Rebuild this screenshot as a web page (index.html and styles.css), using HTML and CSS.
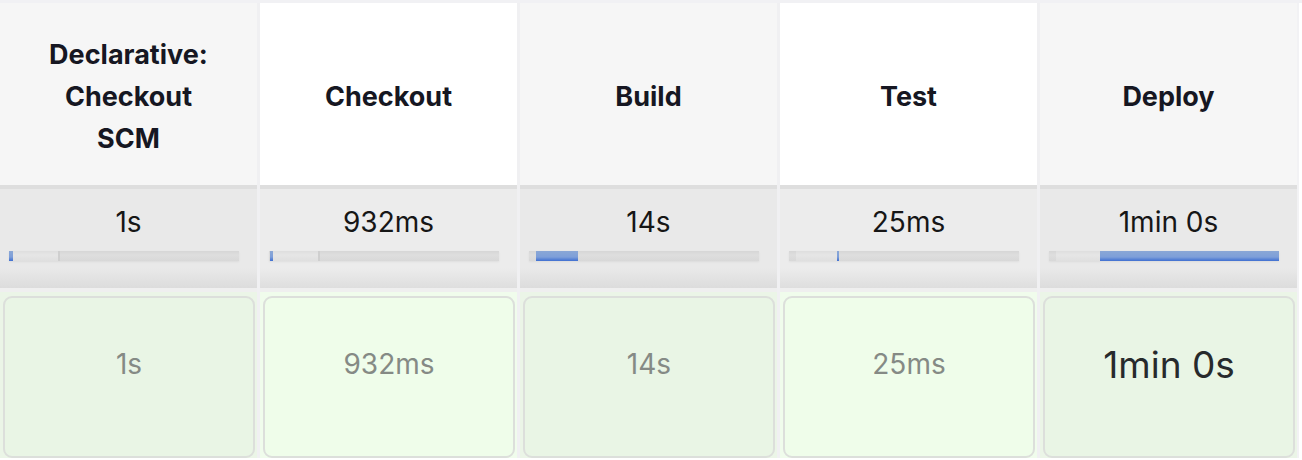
FILE: index.html
```html
<!DOCTYPE html>
<html>
<head>
<meta charset="utf-8">
<link rel="stylesheet" href="styles.css">
</head>
<body>
<div class="stage-view">
  <div class="col col-alt">
    <div class="head"><span class="name">Declarative: Checkout SCM</span></div>
    <div class="avg">
      <div class="avg-time">1s</div>
      <div class="bar">
        <span class="seg light" style="left:4px;width:45px"></span>
        <span class="seg mark" style="left:49px"></span>
        <span class="seg run" style="left:0;width:4px"></span>
      </div>
    </div>
    <div class="cell"><div class="box">1s</div></div>
  </div>
  <div class="col">
    <div class="head"><span class="name">Checkout</span></div>
    <div class="avg">
      <div class="avg-time">932ms</div>
      <div class="bar">
        <span class="seg light" style="left:4px;width:45px"></span>
        <span class="seg mark" style="left:49px"></span>
        <span class="seg run" style="left:1px;width:3px"></span>
      </div>
    </div>
    <div class="cell"><div class="box">932ms</div></div>
  </div>
  <div class="col col-alt">
    <div class="head"><span class="name">Build</span></div>
    <div class="avg">
      <div class="avg-time">14s</div>
      <div class="bar">
        <span class="seg light" style="left:7px;width:42px"></span>
        <span class="seg run" style="left:7px;width:42px"></span>
      </div>
    </div>
    <div class="cell"><div class="box">14s</div></div>
  </div>
  <div class="col">
    <div class="head"><span class="name">Test</span></div>
    <div class="avg">
      <div class="avg-time">25ms</div>
      <div class="bar">
        <span class="seg light" style="left:7px;width:42px"></span>
        <span class="seg run" style="left:48px;width:2px"></span>
      </div>
    </div>
    <div class="cell"><div class="box">25ms</div></div>
  </div>
  <div class="col col-alt">
    <div class="head"><span class="name">Deploy</span></div>
    <div class="avg">
      <div class="avg-time">1min 0s</div>
      <div class="bar">
        <span class="seg light" style="left:7px;width:44px"></span>
        <span class="seg run" style="left:51px;width:179px"></span>
      </div>
    </div>
    <div class="cell"><div class="box box-long">1min 0s</div></div>
  </div>
</div>
</body>
</html>
```
FILE: styles.css
```css
html, body {
  margin: 0;
  padding: 0;
  background: #ffffff;
}
body {
  font-family: Inter, "Noto Sans", "Liberation Sans", sans-serif;
  overflow: hidden;
}
.stage-view {
  display: flex;
  border-top: 3px solid #f1f1f4;
  width: 1302px;
}
.col {
  width: 257px;
  border-right: 3px solid #f0f0f2;
  display: flex;
  flex-direction: column;
  flex: none;
}
.col:last-child {
  width: 257px;
  border-right: 2px solid #f2f2f4;
}
.head {
  height: 182px;
  display: flex;
  align-items: center;
  justify-content: center;
  background: #ffffff;
  text-align: center;
  padding: 6px 40px 0;
  box-sizing: border-box;
}
.col-alt .head {
  background: #f6f6f6;
}
.name {
  font-size: 27px;
  font-weight: 700;
  line-height: 42px;
  color: #161722;
}
.avg {
  height: 99px;
  border-top: 4px solid #dedede;
  border-bottom: 4px solid #efefef;
  background: linear-gradient(#e9e9e9 0%, #e9e9e9 80%, #dcdcdc 100%);
  display: flex;
  flex-direction: column;
  align-items: center;
}
.col:not(.col-alt) .avg {
  background: linear-gradient(#ececec 0%, #ececec 80%, #dedede 100%);
}
.avg-time {
  margin-top: 16px;
  font-size: 28px;
  line-height: 34px;
  color: #161616;
}
.bar {
  position: relative;
  align-self: flex-start;
  margin-left: 9px;
  width: 230px;
  height: 10px;
  margin-top: 12px;
  background: linear-gradient(#d6d6d6, #dedede 40%, #d8d8d8);
  box-shadow: 0 1px 2px rgba(0,0,0,0.06);
}
.seg {
  position: absolute;
  top: 0;
  height: 10px;
}
.seg.light {
  background: linear-gradient(#dedede, #e6e6e6 40%, #dfdfdf);
}
.seg.mark {
  width: 2px;
  background: #cfcfcf;
}
.seg.run {
  background: linear-gradient(#8aa7d6, #7e9fd9 60%, #3f6fd1);
}
.cell {
  flex: 1;
  height: 168px;
  background: #f0fcec;
  padding: 4px 2px 0 3px;
  box-sizing: border-box;
}
.col-alt .cell {
  background: #ebf5e7;
}
.box {
  height: 162px;
  box-sizing: border-box;
  border: 2px solid #dcdfdb;
  border-radius: 9px;
  background: #effdea;
  display: flex;
  align-items: center;
  justify-content: center;
  padding-bottom: 26px;
  font-size: 28px;
  color: #858a85;
}
.col-alt .box {
  background: #e9f5e5;
}
.box-long {
  font-size: 37px;
  color: #272a2c;
}
```
